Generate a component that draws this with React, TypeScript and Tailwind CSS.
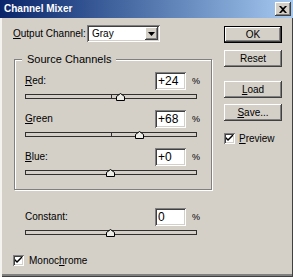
import React from 'react';

const raised =
  'bg-[#d4d0c8] shadow-[inset_-1px_-1px_0_#404040,inset_1px_1px_0_#ffffff,inset_-2px_-2px_0_#808080,inset_2px_2px_0_#d4d0c8]';
const sunken =
  'bg-white shadow-[inset_1px_1px_0_#808080,inset_-1px_-1px_0_#ffffff,inset_2px_2px_0_#404040,inset_-2px_-2px_0_#d4d0c8]';

function Key({ k, rest }: { k: string; rest: string }) {
  return (
    <>
      <span className="underline underline-offset-[1px]">{k}</span>
      {rest}
    </>
  );
}

function Thumb({ value }: { value: number }) {
  // range -200..+200 over a 171px track
  const left = ((value + 200) / 400) * 171 - 4.5;
  return (
    <svg
      width="9"
      height="8"
      viewBox="0 0 9 8"
      className="absolute top-[-1px]"
      style={{ left }}
    >
      <path d="M0.5 3.5 L4.5 0.5 L8.5 3.5 L8.5 7.5 L0.5 7.5 Z" fill="#ecebe6" stroke="#000" />
    </svg>
  );
}

function Slider({ value }: { value: number }) {
  return (
    <div className="relative mt-[4px] h-[12px] w-[172px]">
      <div className="flex h-[5px] w-full border border-[#303030] bg-[#d4d0c8]">
        <div className="flex-1 border-r border-[#303030]" />
        <div className="flex-1" />
      </div>
      <Thumb value={value} />
    </div>
  );
}

function Channel({ label, value }: { label: React.ReactNode; value: string }) {
  const n = parseInt(value, 10) || 0;
  return (
    <div className="flex flex-col">
      <div className="flex h-[18px] items-center">
        <span className="w-[130px] whitespace-nowrap">{label}</span>
        <div className={`flex h-[18px] w-[31px] items-center pl-[3px] text-[12px] ${sunken}`}>{value}</div>
        <span className="ml-[6px] text-[9px]">%</span>
      </div>
      <Slider value={n} />
    </div>
  );
}

function Button({ children, main }: { children: React.ReactNode; main?: boolean }) {
  return (
    <div
      className={`flex h-[17px] w-[58px] items-center justify-center ${
        main
          ? 'bg-[#d4d0c8] shadow-[inset_0_0_0_1px_#000,inset_-2px_-2px_0_#404040,inset_2px_2px_0_#ffffff,inset_-3px_-3px_0_#808080]'
          : raised
      }`}
    >
      {children}
    </div>
  );
}

function Check() {
  return (
    <div className={`flex h-[11px] w-[11px] items-center justify-center ${sunken}`}>
      <svg width="7" height="7" viewBox="0 0 7 7">
        <path d="M0 2 L0 4 L2 6 L7 1 L7 -1 L2 4 Z" fill="#000" />
      </svg>
    </div>
  );
}

export default function App() {
  return (
    <div className="flex h-[277px] w-[293px] flex-col overflow-hidden bg-[#d4d0c8] font-['Liberation_Sans',Arial,sans-serif] text-[10px] leading-[12px] text-black shadow-[inset_2px_0_0_#f4f3ef,inset_-1px_0_0_#404040,inset_0_-1px_0_#404040,inset_0_-3px_0_#808080]">
      {/* title bar */}
      <div className="flex h-[18px] shrink-0 items-center bg-linear-to-r from-[#0a246a] to-[#a6caf0] pl-[4px]">
        <span className="flex-1 text-[10px] font-bold text-white">Channel Mixer</span>
        <div className={`mr-[2px] flex h-[14px] w-[16px] items-center justify-center ${raised}`}>
          <svg width="8" height="7" viewBox="0 0 8 7">
            <path d="M0 0 L2 0 L4 2 L6 0 L8 0 L5 3.5 L8 7 L6 7 L4 5 L2 7 L0 7 L3 3.5 Z" fill="#000" />
          </svg>
        </div>
      </div>

      <div className="flex flex-1">
        {/* left column */}
        <div className="flex w-[212px] flex-col pl-[13px]">
          <div className="mt-[7px] flex h-[17px] items-center">
            <span className="w-[74px] whitespace-nowrap">
              <Key k="O" rest="utput Channel:" />
            </span>
            <div className={`flex h-[17px] w-[73px] items-center pl-[5px] ${sunken}`}>
              <span className="flex-1">Gray</span>
              <div className={`mr-[2px] flex h-[13px] w-[13px] items-center justify-center ${raised}`}>
                <svg width="7" height="4" viewBox="0 0 7 4">
                  <path d="M0 0 L7 0 L3.5 4 Z" fill="#000" />
                </svg>
              </div>
            </div>
          </div>

          <fieldset className="mt-[11px] ml-[1px] w-[195px] border border-[#808080] pt-[6px] pr-[11px] pb-[7px] pl-[10px] shadow-[1px_1px_0_#ffffff,inset_1px_1px_0_#ffffff]">
            <legend className="ml-[-3px] bg-[#d4d0c8] px-[5px] text-[11px] leading-[13px]">Source Channels</legend>
            <div className="flex flex-col gap-[4px]">
              <Channel label={<Key k="R" rest="ed:" />} value="+24" />
              <Channel label={<Key k="G" rest="reen" />} value="+68" />
              <Channel label={<Key k="B" rest="lue:" />} value="+0" />
            </div>
          </fieldset>

          <div className="mt-[18px] pl-[12px]">
            <Channel label="Constant:" value="0" />
          </div>

          <div className="mt-[13px] flex h-[11px] items-center gap-[5px]">
            <Check />
            <span>
              Monoc<Key k="h" rest="rome" />
            </span>
          </div>
        </div>

        {/* right column */}
        <div className="flex flex-col pl-[12px]">
          <div className="mt-[8px]">
            <Button main>OK</Button>
          </div>
          <div className="mt-[7px]">
            <Button>Reset</Button>
          </div>
          <div className="mt-[14px]">
            <Button>
              <Key k="L" rest="oad" />
            </Button>
          </div>
          <div className="mt-[6px]">
            <Button>
              <Key k="S" rest="ave..." />
            </Button>
          </div>
          <div className="mt-[12px] flex h-[11px] items-center gap-[4px]">
            <Check />
            <span>
              <Key k="P" rest="review" />
            </span>
          </div>
        </div>
      </div>
    </div>
  );
}
